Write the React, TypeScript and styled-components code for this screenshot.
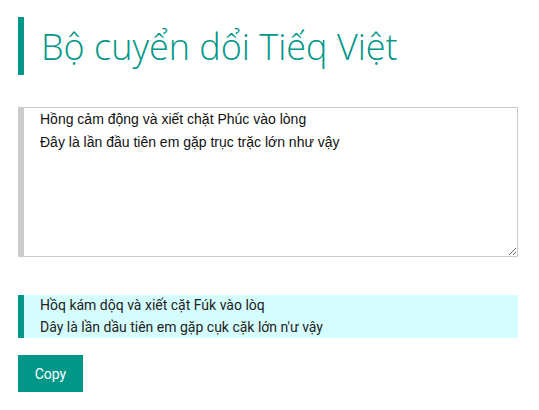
import React, { useState } from "react";
import styled, { createGlobalStyle } from "styled-components";

const Global = createGlobalStyle`
  html, body { margin: 0; padding: 0; background: #fff; }
  * { box-sizing: border-box; }
`;

const Page = styled.div`
  width: 500px;
  margin: 17px 0 0 18px;
  display: flex;
  flex-direction: column;
  align-items: flex-start;
`;

const Title = styled.h1`
  margin: 0;
  height: 58px;
  width: 100%;
  display: flex;
  align-items: center;
  border-left: 6px solid #009688;
  padding-left: 17px;
  font-family: "Open Sans", "Noto Sans", sans-serif;
  font-weight: 300;
  font-size: 36px;
  color: #009688;
`;

const Input = styled.textarea`
  margin-top: 32px;
  width: 500px;
  height: 150px;
  border: 1px solid #ccc;
  border-left: 6px solid #ccc;
  padding: 0 16px;
  font-family: "Liberation Sans", Arial, sans-serif;
  font-size: 14px;
  line-height: 23px;
  color: #111;
  outline: none;
  resize: vertical;
  display: block;
`;

const Output = styled.div`
  margin-top: 38px;
  width: 500px;
  height: 43px;
  background: #d6fdfd;
  border-left: 6px solid #009688;
  padding: 0 16px;
  font-family: Roboto, sans-serif;
  font-size: 14px;
  line-height: 21.5px;
  color: #222;
`;

const Line = styled.div``;

const CopyButton = styled.button`
  margin-top: 17px;
  width: 65px;
  height: 37px;
  border: none;
  background: #009688;
  color: #fff;
  font-family: Roboto, sans-serif;
  font-size: 14px;
  cursor: pointer;
  padding: 0;
`;

export default function App() {
  const [text, setText] = useState(
    "Hồng cảm động và xiết chặt Phúc vào lòng\nĐây là lần đầu tiên em gặp trục trặc lớn như vậy"
  );
  const out = [
    "Hồq kám dộq và xiết cặt Fúk vào lòq",
    "Dây là lần dầu tiên em gặp cụk cặk lớn n'ư vậy",
  ];
  return (
    <>
      <Global />
      <Page>
        <Title>Bộ cuyển dổi Tiếq Việt</Title>
        <Input value={text} onChange={(e) => setText(e.target.value)} spellCheck={false} />
        <Output>
          {out.map((l, i) => (
            <Line key={i}>{l}</Line>
          ))}
        </Output>
        <CopyButton>Copy</CopyButton>
      </Page>
    </>
  );
}
